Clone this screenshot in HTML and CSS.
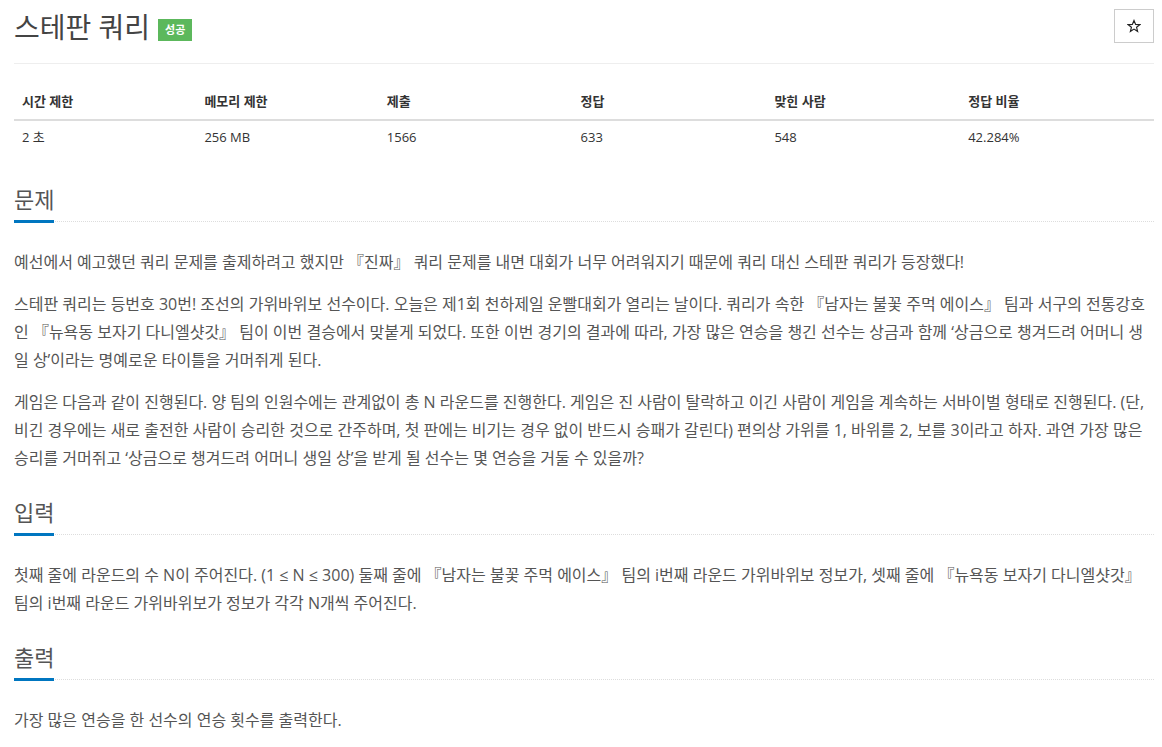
FILE: index.html
```html
<!DOCTYPE html>
<html lang="ko">
<head>
  <meta charset="UTF-8">
  <meta name="viewport" content="width=device-width, initial-scale=1.0">
  <title>스테판 쿼리</title>
  <link rel="stylesheet" href="styles.css">
</head>
<body>
  <div class="container">
    <!-- Header -->
    <div class="page-header">
      <h1>
        <span class="problem-title">스테판 쿼리</span>
        <span class="label-success">성공</span>
      </h1>
      <button class="star-button" title="즐겨찾기">
        <svg width="14" height="14" viewBox="0 0 24 24">
          <polygon points="12,2.5 14.8,9.2 22,9.6 16.4,14.2 18.2,21.2 12,17.3 5.8,21.2 7.6,14.2 2,9.6 9.2,9.2" fill="none" stroke="#222" stroke-width="2" stroke-linejoin="miter"/>
        </svg>
      </button>
    </div>

    <!-- Problem info -->
    <table class="problem-info">
      <thead>
        <tr>
          <th class="col-16">시간 제한</th>
          <th class="col-16">메모리 제한</th>
          <th class="col-17">제출</th>
          <th class="col-17">정답</th>
          <th class="col-17">맞힌 사람</th>
          <th class="col-17">정답 비율</th>
        </tr>
      </thead>
      <tbody>
        <tr>
          <td>2 초</td>
          <td>256 MB</td>
          <td>1566</td>
          <td>633</td>
          <td>548</td>
          <td>42.284%</td>
        </tr>
      </tbody>
    </table>

    <!-- Description -->
    <section class="problem-section">
      <div class="headline"><h2>문제</h2></div>
      <div class="problem-text">
        <p>예선에서 예고했던 쿼리 문제를 출제하려고 했지만 『진짜』 쿼리 문제를 내면 대회가 너무 어려워지기 때문에 쿼리 대신 스테판 쿼리가 등장했다!</p>
        <p>스테판 쿼리는 등번호 30번! 조선의 가위바위보 선수이다. 오늘은 제1회 천하제일 운빨대회가 열리는 날이다. 쿼리가 속한 『남자는 불꽃 주먹 에이스』 팀과 서구의 전통강호인 『뉴욕동 보자기 다니엘샷갓』 팀이 이번 결승에서 맞붙게 되었다. 또한 이번 경기의 결과에 따라, 가장 많은 연승을 챙긴 선수는 상금과 함께 ‘상금으로 챙겨드려 어머니 생일 상’이라는 명예로운 타이틀을 거머쥐게 된다.</p>
        <p>게임은 다음과 같이 진행된다. 양 팀의 인원수에는 관계없이 총 N 라운드를 진행한다. 게임은 진 사람이 탈락하고 이긴 사람이 게임을 계속하는 서바이벌 형태로 진행된다. (단, 비긴 경우에는 새로 출전한 사람이 승리한 것으로 간주하며, 첫 판에는 비기는 경우 없이 반드시 승패가 갈린다) 편의상 가위를 1, 바위를 2, 보를 3이라고 하자. 과연 가장 많은 승리를 거머쥐고 ‘상금으로 챙겨드려 어머니 생일 상’을 받게 될 선수는 몇 연승을 거둘 수 있을까?</p>
      </div>
    </section>

    <!-- Input -->
    <section class="problem-section">
      <div class="headline"><h2>입력</h2></div>
      <div class="problem-text">
        <p>첫째 줄에 라운드의 수 N이 주어진다. (1 ≤ N ≤ 300) 둘째 줄에 『남자는 불꽃 주먹 에이스』 팀의 i번째 라운드 가위바위보 정보가, 셋째 줄에 『뉴욕동 보자기 다니엘샷갓』 팀의 i번째 라운드 가위바위보가 정보가 각각 N개씩 주어진다.</p>
      </div>
    </section>

    <!-- Output -->
    <section class="problem-section">
      <div class="headline"><h2>출력</h2></div>
      <div class="problem-text">
        <p>가장 많은 연승을 한 선수의 연승 횟수를 출력한다.</p>
      </div>
    </section>
  </div>
</body>
</html>
```

FILE: styles.css
```css
body {
  font-family: "Open Sans", "Noto Sans CJK KR", sans-serif;
  margin: 0;
  padding: 0;
  background-color: #fff;
  color: #555;
}

.container {
  padding: 0 8px 0 14px;
}

/* Header */
.page-header {
  display: flex;
  justify-content: space-between;
  align-items: flex-start;
  padding: 7px 0 16px;
  border-bottom: 1px solid #eee;
}

.page-header h1 {
  margin: 0;
  font-size: 28px;
  font-weight: normal;
  line-height: 40px;
  color: #444;
  display: flex;
  align-items: center;
}

.label-success {
  display: inline-block;
  background-color: #5cb85c;
  color: #fff;
  font-size: 11px;
  font-weight: bold;
  line-height: 22px;
  padding: 0 7px;
  margin-left: 8px;
  margin-top: 5px;
}

.star-button {
  width: 40px;
  height: 34px;
  margin-top: 2px;
  background-color: #fff;
  border: 1px solid #ccc;
  cursor: pointer;
  display: flex;
  align-items: center;
  justify-content: center;
  padding: 0;
}

/* Info table */
.problem-info {
  width: 100%;
  border-collapse: collapse;
  margin-top: 19px;
  font-size: 13px;
}

.problem-info th,
.problem-info td {
  padding: 8px;
  line-height: 20px;
  text-align: left;
}

.problem-info th {
  color: #333;
  font-weight: bold;
  border-bottom: 2px solid #ddd;
}

.problem-info td {
  color: #333;
  padding-top: 6px;
}

.col-16 {
  width: 16%;
}

.col-17 {
  width: 17%;
}

/* Sections */
.problem-section {
  margin-top: 29px;
}

.problem-section + .problem-section {
  margin-top: 25px;
}

.headline {
  border-bottom: 1px dotted #ddd;
}

.headline h2 {
  display: inline-block;
  margin: 0 0 -2px;
  font-size: 22px;
  font-weight: normal;
  line-height: 30px;
  padding-bottom: 6px;
  border-bottom: 3px solid #0076c0;
  color: #555;
}

.problem-text {
  margin-top: 26px;
  font-size: 16px;
  line-height: 28px;
}

.problem-text p {
  margin: 0 0 14px;
}
```
